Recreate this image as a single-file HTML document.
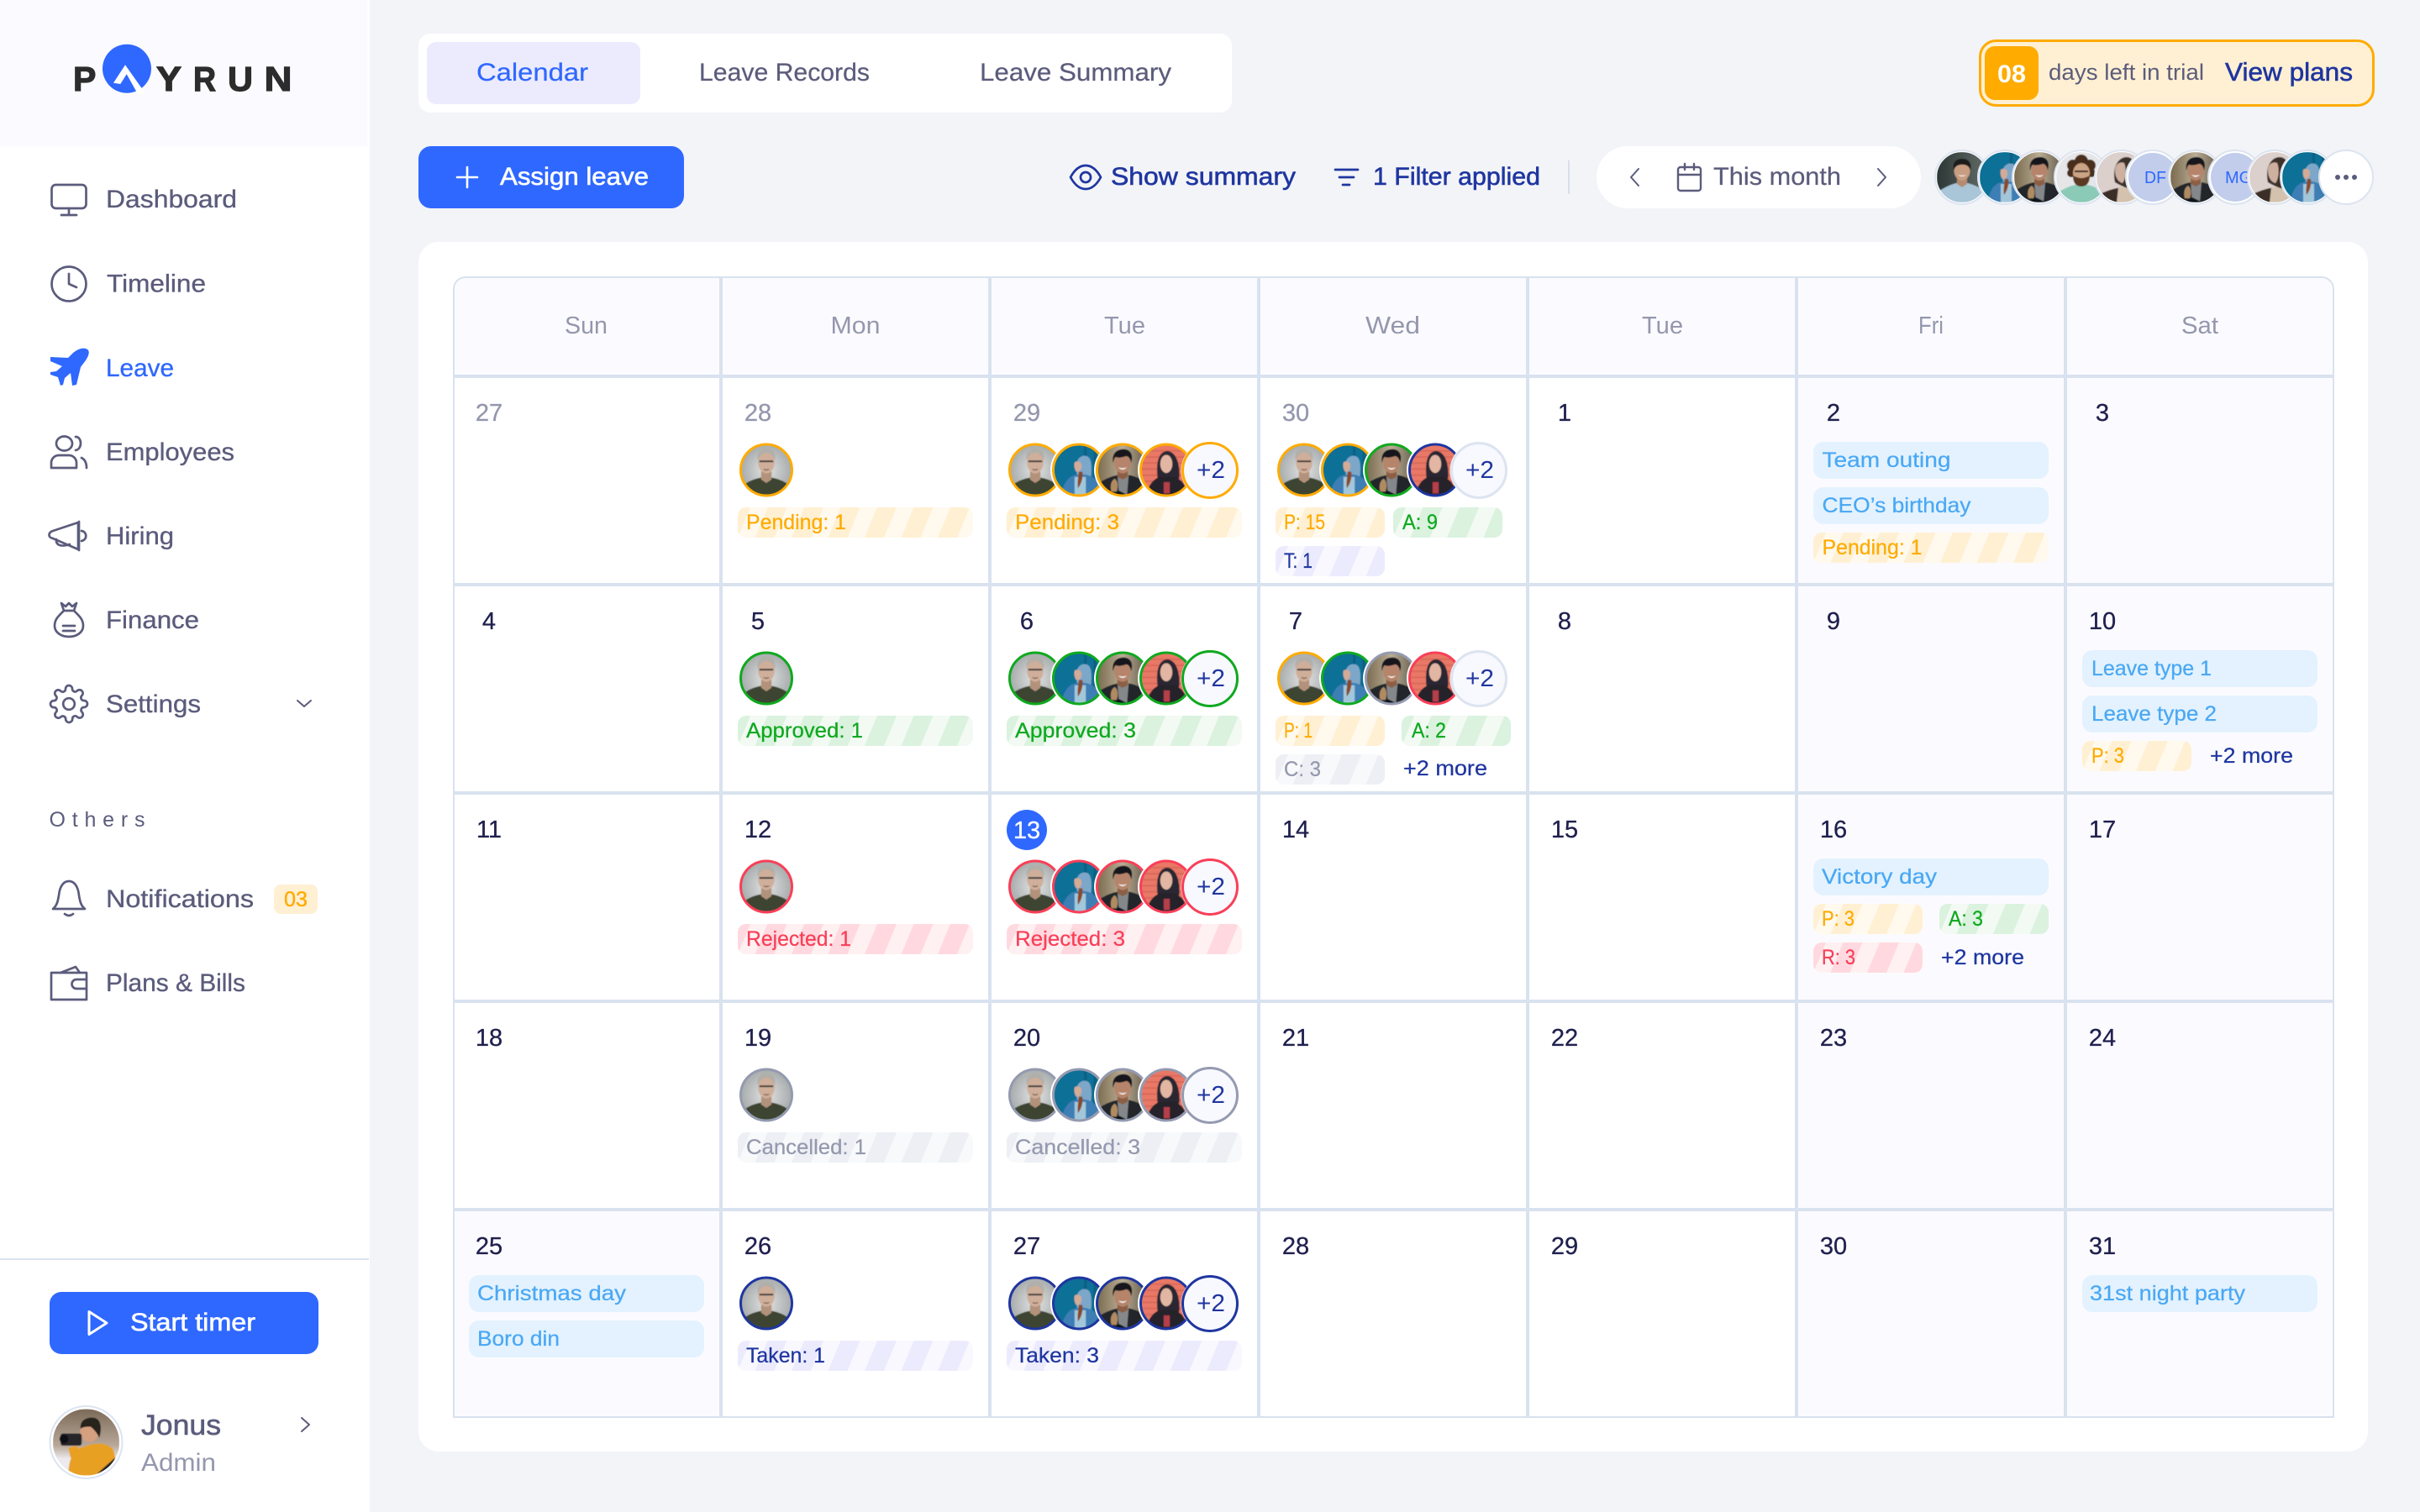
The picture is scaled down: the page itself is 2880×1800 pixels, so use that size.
<!DOCTYPE html>
<html lang="en"><head><meta charset="utf-8"><title>Payrun Leave Calendar</title>
<style>
html,body{margin:0;padding:0;width:2880px;height:1800px;overflow:hidden;background:#f3f4f8}
svg{display:block}
text{font-family:"Liberation Sans",sans-serif}
.nv{font-size:30px;fill:#5b5c7c;stroke:#5b5c7c;stroke-width:.35px}
.tb{font-size:30px;fill:#5b5c7c;stroke:#5b5c7c;stroke-width:.25px}
.m{stroke-width:.6px}
.ch{font-size:25px;stroke-width:.25px}
.d{font-size:29px;text-anchor:middle;fill:#20204f;stroke:#20204f;stroke-width:.3px}
.d.mu{fill:#9497ad;stroke:#9497ad}
.hd{font-size:29px;fill:#9497ad}
.pl{font-size:29px;fill:#1f36a0}
.cP{fill:#ffab00;stroke:#ffab00}.cA{fill:#0fa91f;stroke:#0fa91f}.cR{fill:#f93f58;stroke:#f93f58}.cC{fill:#9499ae;stroke:#9499ae}.cT{fill:#1f36a0;stroke:#1f36a0}.cH{fill:#4aa8f4;stroke:#4aa8f4}
.ic{fill:none;stroke:#5b5c7c;stroke-width:2.7;stroke-linecap:round;stroke-linejoin:round}
.nvi{fill:none;stroke:#1f36a0;stroke-width:2.7;stroke-linecap:round;stroke-linejoin:round}
.lg{font-size:41px;font-weight:700;fill:#2c2c2c;stroke:#2c2c2c;stroke-width:1.2px}
</style></head><body>
<svg width="2880" height="1800" viewBox="0 0 2880 1800" xmlns="http://www.w3.org/2000/svg">
<defs>
<filter id="b" x="-10%" y="-10%" width="120%" height="120%"><feGaussianBlur stdDeviation=".45"/></filter>
<clipPath id="c"><circle r="30"/></clipPath>
<radialGradient id="g1"><stop offset="0" stop-color="#e2e4e4"/><stop offset="1" stop-color="#a6aaaa"/></radialGradient>
<linearGradient id="g3" x1="0" x2="1" y1="0" y2="0"><stop offset="0" stop-color="#7a6a4e"/><stop offset=".5" stop-color="#b9ad95"/><stop offset="1" stop-color="#5d5445"/></linearGradient>
<linearGradient id="g5" x1="0" x2="1" y1="0" y2="0"><stop offset="0" stop-color="#2c3836"/><stop offset="1" stop-color="#626c68"/></linearGradient>
<linearGradient id="g8" x1="0" x2="0" y1="0" y2="1"><stop offset="0" stop-color="#7c6a58"/><stop offset=".55" stop-color="#b8a898"/><stop offset=".75" stop-color="#eceaee"/></linearGradient>
<pattern id="pP" patternUnits="userSpaceOnUse" width="43.5" height="36" patternTransform="translate(-8 0) skewX(-22.6)"><rect width="43.5" height="36" fill="#fff9ee"/><rect width="23" height="36" fill="#fff0d3"/></pattern>
<pattern id="pA" patternUnits="userSpaceOnUse" width="43.5" height="36" patternTransform="translate(-8 0) skewX(-22.6)"><rect width="43.5" height="36" fill="#f2faf3"/><rect width="23" height="36" fill="#daf2de"/></pattern>
<pattern id="pR" patternUnits="userSpaceOnUse" width="43.5" height="36" patternTransform="translate(-8 0) skewX(-22.6)"><rect width="43.5" height="36" fill="#fff0f2"/><rect width="23" height="36" fill="#ffd9df"/></pattern>
<pattern id="pC" patternUnits="userSpaceOnUse" width="43.5" height="36" patternTransform="translate(-8 0) skewX(-22.6)"><rect width="43.5" height="36" fill="#f8f9fb"/><rect width="23" height="36" fill="#edeff4"/></pattern>
<pattern id="pT" patternUnits="userSpaceOnUse" width="43.5" height="36" patternTransform="translate(-8 0) skewX(-22.6)"><rect width="43.5" height="36" fill="#f9f8ff"/><rect width="23" height="36" fill="#ecebfe"/></pattern>

<g id="p1" clip-path="url(#c)"><g filter="url(#b)"><rect x="-30" y="-30" width="60" height="60" fill="url(#g1)"/>
<path d="M-30 30V21Q-22 12-7 9H7Q22 12 30 21V30Z" fill="#3e4530"/><path d="M-6 2H6V11L0 15-6 11Z" fill="#b3927c"/>
<ellipse cx="0" cy="-9" rx="9.5" ry="13" fill="#cfae9a"/><path d="M-10-11C-11-22-6-25 0-25 7-25 11-21 10-11 8-17 4-20 0-20-4-20-8-17-10-11Z" fill="#b0afaa"/>
<path d="M-8-10H-2M2-10H8M-2-10H2" stroke="#2e3032" stroke-width="1.8"/><path d="M-3-1Q0 1 3-1" stroke="#7a5a4a" stroke-width="1.2" fill="none"/></g></g>

<g id="p2" clip-path="url(#c)"><g filter="url(#b)"><rect x="-30" y="-30" width="60" height="60" fill="#0e6f96"/><rect x="6" y="-30" width="3" height="60" fill="#0b5f82"/><rect x="17" y="-30" width="3" height="60" fill="#0b5f82"/>
<path d="M-3-2C-4-13 3-18 9-16 15-14 15-4 14 8L-2 8Z" fill="#7da7c9"/><path d="M-5-9C-2-11 3-10 3-5 3 0 0 3-3 2-5 0-6-5-5-9Z" fill="#d3ab96"/>
<path d="M-20 30C-19 16-12 7-4 6 4 4 14 5 20 12 24 18 26 24 26 30Z" fill="#3c7eb4"/><path d="M-5 30V8H8V30Z" fill="#a3c7da"/><path d="M0 2C-1 10-2 16-1 21 3 16 5 8 4 2Z" fill="#8a4a2a"/></g></g>

<g id="p3" clip-path="url(#c)"><g filter="url(#b)"><rect x="-30" y="-30" width="60" height="60" fill="url(#g3)"/>
<path d="M-30 30V17Q-18 8-6 6H8Q22 9 30 18V30Z" fill="#20262c"/><path d="M-6 6H7L5 30H-4Z" fill="#85888b"/>
<path d="M-6-2H6V8L0 11-6 8Z" fill="#8c5f44"/><ellipse cx="0" cy="-8" rx="9.5" ry="12" fill="#b5846a"/><path d="M-11-8C-13-20-6-24 1-24 8-24 13-19 10-8 9-13 7-16 4-16-1-14-6-14-8-15-10-13-10-11-11-8Z" fill="#17171b"/><path d="M-5-3Q0 2 5-3Q0-1-5-3Z" fill="#fff"/>
<path d="M-13 25C-15 18-13 12-9 10-5 13-5 20-7 25Z" fill="#b08b62"/><path d="M-14 30L-4 24 8 30Z" fill="#11141a"/></g></g>

<g id="p4" clip-path="url(#c)"><g filter="url(#b)"><rect x="-30" y="-30" width="60" height="60" fill="#ea7866"/>
<path d="M-30-22H30M-30-15H30M-30-8H30M-30-1H30M-30 6H30M-30 13H30" stroke="#d4675a" stroke-width="1.6"/>
<path d="M-10 10C-12-6-10-21 1-22 12-21 16-6 15 10Z" fill="#2a2630"/><path d="M-23 30C-22 20-16 11-8 8H10C18 11 24 20 25 30Z" fill="#25222a"/>
<ellipse cx="0" cy="-7" rx="7" ry="10.5" fill="#e2b6a2"/><path d="M-3 14H4V27H-3Z" fill="#b5404a"/></g></g>

<g id="p5" clip-path="url(#c)"><g filter="url(#b)"><rect x="-30" y="-30" width="60" height="60" fill="url(#g5)"/>
<path d="M-30 30V18Q-18 10-7 7H7Q18 10 30 18V30Z" fill="#a9c5d8"/><path d="M-6 0H6V8L0 12-6 8Z" fill="#b58a6f"/>
<ellipse cx="0" cy="-8" rx="9.5" ry="12" fill="#c89d81"/><path d="M-10-8C-12-19-6-22 0-22 7-22 12-18 10-8 8-14 5-15 0-15-4-15-8-14-10-8Z" fill="#1f1d1c"/><path d="M-5-3Q0 1 5-3Q0-1-5-3Z" fill="#fff"/></g></g>

<g id="p6" clip-path="url(#c)"><g filter="url(#b)"><rect x="-30" y="-30" width="60" height="60" fill="#e6e6e8"/>
<path d="M-30 30V20Q-18 11-7 9H7Q18 11 30 20V30Z" fill="#8ccab8"/>
<circle cx="-10" cy="-14" r="7" fill="#4a2d1c"/><circle cx="0" cy="-19" r="8" fill="#4a2d1c"/><circle cx="10" cy="-14" r="7" fill="#4a2d1c"/><circle cx="-12" cy="-5" r="5" fill="#4a2d1c"/><circle cx="12" cy="-5" r="5" fill="#4a2d1c"/>
<ellipse cx="0" cy="-5" rx="10" ry="12" fill="#cba385"/><path d="M-10-2C-10 8-5 11 0 11 5 11 10 8 10-2 6 0 3 1 0 1-3 1-6 0-10-2Z" fill="#5a3820"/><path d="M-8-7H-2M2-7H8M-2-7H2" stroke="#2a1c14" stroke-width="2"/></g></g>

<g id="p7" clip-path="url(#c)"><g filter="url(#b)"><rect x="-30" y="-30" width="60" height="60" fill="#dcd0cd"/>
<path d="M-30 30V22Q-15 14 0 12 20 14 30 24V30Z" fill="#3a2d28"/><path d="M-4 12H18L22 30H-6Z" fill="#d4c2ae"/>
<path d="M-8 6C-12-12-4-24 6-24 16-24 20-10 19 12 14 16 6 14-8 6Z" fill="#3d302b"/><path d="M-8-8C-8-16-2-19 3-17 6-10 5 2 1 7-4 6-8 0-8-8Z" fill="#cdb0a0"/></g></g>

<g id="p8" clip-path="url(#c)"><g filter="url(#b)"><rect x="-30" y="-30" width="60" height="60" fill="url(#g8)"/>
<path d="M-16 30C-16 16-12 6-2 4 8 0 18 0 24 6 28 14 26 26 24 30Z" fill="#e8a020"/><path d="M8 30L26 14 30 20V30Z" fill="#232326"/>
<ellipse cx="3" cy="-10" rx="8.5" ry="10" fill="#d5a080"/><path d="M-5-12C-6-21 2-23 8-22 14-20 14-12 12-4 10-8 7-12 4-14 0-14-3-14-5-12Z" fill="#28221f"/>
<rect x="-23" y="-8" width="19" height="11" rx="2" fill="#26262b"/><circle cx="-20" cy="-3" r="4" fill="#101014"/><path d="M-16 5L-8 3-6 9-14 14Z" fill="#e8a020"/></g></g>

<g id="a1"><circle r="34" fill="#fff"/><use href="#p1" transform="scale(1.03)"/><circle r="30.5" fill="none" stroke="currentColor" stroke-width="3"/></g>
<g id="a2"><circle r="34" fill="#fff"/><use href="#p2" transform="scale(1.03)"/><circle r="30.5" fill="none" stroke="currentColor" stroke-width="3"/></g>
<g id="a3"><circle r="34" fill="#fff"/><use href="#p3" transform="scale(1.03)"/><circle r="30.5" fill="none" stroke="currentColor" stroke-width="3"/></g>
<g id="a4"><circle r="34" fill="#fff"/><use href="#p4" transform="scale(1.03)"/><circle r="30.5" fill="none" stroke="currentColor" stroke-width="3"/></g>
<g id="pc"><circle r="34.5" fill="#fff"/><circle r="32.5" fill="#f8f8ff" stroke="currentColor" stroke-width="3"/></g>
<g id="st"><use href="#a1"/><use href="#a2" x="52"/><use href="#a3" x="104"/><use href="#a4" x="156"/><use href="#pc" x="208" y="0.5"/></g>
<g id="h1"><circle r="32" fill="#fff" stroke="#dce4f0" stroke-width="2"/></g>
</defs>

<rect width="2880" height="1800" fill="#f3f4f8"/>

<!-- Sidebar -->
<rect width="440" height="1800" fill="#fff"/>
<rect width="437" height="174" fill="#fbfbff"/>
<text x="87" y="108" class="lg">P</text>
<circle cx="151" cy="81.7" r="29" fill="#2f68ff"/>
<path d="M135 98.7L149 77.3 172.7 110.7H163.3L150.7 88.3 143.3 100Z" fill="#fff"/>
<text x="186" y="108" class="lg" textLength="30" lengthAdjust="spacingAndGlyphs">Y</text>
<text x="230" y="108" class="lg" textLength="27" lengthAdjust="spacingAndGlyphs">R</text>
<text x="271" y="108" class="lg" textLength="30" lengthAdjust="spacingAndGlyphs">U</text>
<text x="314.5" y="108" class="lg" textLength="33" lengthAdjust="spacingAndGlyphs">N</text>

<rect x="61.5" y="220" width="41" height="28" rx="5" class="ic"/><path d="M82 248V255M73 256H91" class="ic"/>
<text x="126" y="247" class="nv" textLength="156" lengthAdjust="spacingAndGlyphs">Dashboard</text>
<circle cx="82" cy="338" r="20.5" class="ic"/><path d="M82 326V338L91 342" class="ic"/>
<text x="127" y="347.5" class="nv" textLength="118" lengthAdjust="spacingAndGlyphs">Timeline</text>
<path d="M104 416C100 413 93 415 87 420L81 426 60 425V430L74 436 67 442 60 443V446L69 449 72 459 75 458 77 450 84 444 86 459 91 458 96 437 102 429C106 423 107 418 104 416Z" fill="#2f68ff"/>
<text x="126" y="448" class="nv" style="fill:#2f68ff;stroke:#2f68ff" textLength="81" lengthAdjust="spacingAndGlyphs">Leave</text>
<ellipse cx="76.5" cy="528" rx="9.5" ry="8.5" class="ic"/><path d="M61 557V551A9 9 0 0 1 70 542H82A9 9 0 0 1 91 551V557Z" class="ic"/><path d="M90 520C98 520 98 535 90 536M97 545C101 547 103 551 103 557" class="ic"/>
<text x="126" y="548" class="nv" textLength="153" lengthAdjust="spacingAndGlyphs">Employees</text>
<path d="M93 622L63 632C57 634 57 640 63 641L93 654ZM94 621V655M97 632C104 633 104 643 97 644M67 642C66 650 74 651 83 648" class="ic"/>
<text x="126" y="648" class="nv" textLength="81" lengthAdjust="spacingAndGlyphs">Hiring</text>
<path d="M73 718L78 722 82 718 86 722 91 718 88 727H76ZM76 727C70 733 65 737 65 745 65 753 73 758 82 758 91 758 99 753 99 745 99 737 94 733 88 727M75 745H89M75 751H89" class="ic"/>
<text x="126" y="748" class="nv" textLength="111" lengthAdjust="spacingAndGlyphs">Finance</text>
<g transform="translate(58 814) scale(2)" class="ic" style="stroke-width:1.35"><circle cx="12" cy="12" r="3.4"/><path d="M19.4 15a1.65 1.65 0 0 0 .33 1.82l.06.06a2 2 0 0 1 0 2.83 2 2 0 0 1-2.83 0l-.06-.06a1.65 1.65 0 0 0-1.82-.33 1.65 1.65 0 0 0-1 1.51V21a2 2 0 0 1-2 2 2 2 0 0 1-2-2v-.09A1.65 1.65 0 0 0 9 19.4a1.65 1.65 0 0 0-1.82.33l-.06.06a2 2 0 0 1-2.83 0 2 2 0 0 1 0-2.83l.06-.06a1.65 1.65 0 0 0 .33-1.82 1.65 1.65 0 0 0-1.51-1H3a2 2 0 0 1-2-2 2 2 0 0 1 2-2h.09A1.65 1.65 0 0 0 4.6 9a1.65 1.65 0 0 0-.33-1.82l-.06-.06a2 2 0 0 1 0-2.83 2 2 0 0 1 2.83 0l.06.06a1.65 1.65 0 0 0 1.82.33H9a1.65 1.65 0 0 0 1-1.51V3a2 2 0 0 1 2-2 2 2 0 0 1 2 2v.09a1.65 1.65 0 0 0 1 1.51 1.65 1.65 0 0 0 1.82-.33l.06-.06a2 2 0 0 1 2.83 0 2 2 0 0 1 0 2.83l-.06.06a1.65 1.65 0 0 0-.33 1.82V9a1.65 1.65 0 0 0 1.51 1H21a2 2 0 0 1 2 2 2 2 0 0 1-2 2h-.09a1.65 1.65 0 0 0-1.51 1z"/></g>
<text x="126" y="848" class="nv" textLength="113" lengthAdjust="spacingAndGlyphs">Settings</text>
<path d="M354 834L362 841 370 834" class="ic" style="stroke-width:2"/>

<text x="58.5" y="984" font-size="25" fill="#5b5c7c" textLength="114">Others</text>
<path d="M63 1082C68 1078 69 1072 70 1066 71 1056 75 1049 82 1049 89 1049 93 1056 94 1066 95 1072 96 1078 101 1082ZM77 1088Q82 1092 87 1088" class="ic"/>
<text x="126" y="1080" class="nv" textLength="176" lengthAdjust="spacingAndGlyphs">Notifications</text>
<rect x="326" y="1053" width="52" height="35" rx="8" fill="#fff0d3"/>
<text x="338" y="1079" font-size="25" fill="#ffab00" stroke="#ffab00" stroke-width=".4" textLength="28" lengthAdjust="spacingAndGlyphs">03</text>
<path d="M61 1158H103V1190H61ZM72 1158L90 1151 95 1158M103 1166H91A5.5 5.5 0 0 0 91 1177H103" class="ic"/>
<text x="126" y="1180" class="nv" textLength="166" lengthAdjust="spacingAndGlyphs">Plans &amp; Bills</text>

<rect y="1498" width="439" height="2" fill="#dde3f0"/>
<rect x="59" y="1538" width="320" height="74" rx="14" fill="#2f68ff"/>
<path d="M106 1561.5L127 1575 106 1588.5Z" fill="none" stroke="#fff" stroke-width="3" stroke-linejoin="round"/>
<text x="155" y="1584" class="m" font-size="30" fill="#fff" stroke="#fff" textLength="149" lengthAdjust="spacingAndGlyphs">Start timer</text>
<circle cx="102.5" cy="1717" r="43" fill="#fff" stroke="#dce4f0" stroke-width="2"/>
<use href="#p8" transform="translate(102.5 1717) scale(1.32)"/>
<text x="168" y="1708" font-size="34" fill="#5b5c7c" class="m" stroke="#5b5c7c" textLength="95" lengthAdjust="spacingAndGlyphs">Jonus</text>
<text x="168" y="1751" font-size="30" fill="#9497ad" textLength="89" lengthAdjust="spacingAndGlyphs">Admin</text>
<path d="M359 1688L368 1696 359 1704" class="ic" style="stroke-width:2"/>

<!-- Top bar -->
<rect x="498" y="40" width="968" height="94" rx="14" fill="#fff"/>
<rect x="508" y="50" width="254" height="74" rx="11" fill="#ecebfe"/>
<text x="567" y="96" class="tb" style="fill:#2f68ff;stroke:#2f68ff" textLength="133" lengthAdjust="spacingAndGlyphs">Calendar</text>
<text x="832" y="96" class="tb" textLength="203" lengthAdjust="spacingAndGlyphs">Leave Records</text>
<text x="1166" y="96" class="tb" textLength="228" lengthAdjust="spacingAndGlyphs">Leave Summary</text>

<rect x="2356.5" y="48.5" width="468" height="77" rx="19" fill="#fff0d3" stroke="#ffab00" stroke-width="3"/>
<rect x="2362" y="55" width="64" height="64" rx="12" fill="#ffab00"/>
<text x="2377" y="98" font-size="30" fill="#fff" font-weight="700" textLength="34" lengthAdjust="spacingAndGlyphs">08</text>
<text x="2438" y="95" font-size="27" fill="#5b5c7c" textLength="185" lengthAdjust="spacingAndGlyphs">days left in trial</text>
<text x="2648" y="96" font-size="31" fill="#1f36a0" class="m" stroke="#1f36a0" textLength="152" lengthAdjust="spacingAndGlyphs">View plans</text>

<rect x="498" y="174" width="316" height="74" rx="15" fill="#2f68ff"/>
<path d="M556 199V223M544 211H568" stroke="#fff" stroke-width="2.6" stroke-linecap="round"/>
<text x="595" y="220" font-size="30" fill="#fff" class="m" stroke="#fff" textLength="177" lengthAdjust="spacingAndGlyphs">Assign leave</text>

<path d="M1274 211C1280 200 1286 197 1292 197 1298 197 1304 200 1310 211 1304 222 1298 225 1292 225 1286 225 1280 222 1274 211Z" class="nvi"/><circle cx="1292" cy="211" r="6" class="nvi"/>
<text x="1322" y="220" font-size="30" fill="#1f36a0" class="m" stroke="#1f36a0" textLength="220" lengthAdjust="spacingAndGlyphs">Show summary</text>
<path d="M1589 202H1616M1594 211H1611M1598 220H1606" class="nvi"/>
<text x="1634" y="220" font-size="30" fill="#1f36a0" class="m" stroke="#1f36a0" textLength="199" lengthAdjust="spacingAndGlyphs">1 Filter applied</text>
<rect x="1866" y="191" width="2" height="40" fill="#d8deea"/>

<rect x="1900" y="174" width="386" height="74" rx="37" fill="#fff"/>
<path d="M1950 201L1941 211 1950 221M2235 201L2244 211 2235 221" class="ic" style="stroke-width:2"/>
<rect x="1997" y="199" width="27" height="28" rx="3" class="ic" style="stroke-width:2.4"/><path d="M1997 208H2024M2005 195V202M2016 195V202" class="ic" style="stroke-width:2.4"/>
<text x="2039" y="220" class="tb" textLength="152" lengthAdjust="spacingAndGlyphs">This month</text>

<g transform="translate(2335 211)"><use href="#h1"/><use href="#p5"/></g>
<g transform="translate(2386 211)"><use href="#h1"/><use href="#p2"/></g>
<g transform="translate(2427 211)"><use href="#h1"/><use href="#p3"/></g>
<g transform="translate(2477 211)"><use href="#h1"/><use href="#p6"/></g>
<g transform="translate(2525 211)"><use href="#h1"/><use href="#p7"/></g>
<g transform="translate(2562 211)"><use href="#h1"/><circle r="29" fill="#c1cdeb"/></g>
<text x="2552" y="218" font-size="20" fill="#2f68ff" textLength="26" lengthAdjust="spacingAndGlyphs">DF</text>
<g transform="translate(2613 211)"><use href="#h1"/><use href="#p3"/></g>
<g transform="translate(2660 211)"><use href="#h1"/><circle r="29" fill="#c1cdeb"/></g>
<text x="2648" y="218" font-size="20" fill="#2f68ff">MG</text>
<g transform="translate(2707 211)"><use href="#h1"/><use href="#p7"/></g>
<g transform="translate(2746 211)"><use href="#h1"/><use href="#p2"/></g>
<g transform="translate(2792 211)"><use href="#h1"/></g>
<circle cx="2782" cy="211" r="3" fill="#5b5c7c"/><circle cx="2792" cy="211" r="3" fill="#5b5c7c"/><circle cx="2802" cy="211" r="3" fill="#5b5c7c"/>

<!-- Calendar card -->
<rect x="498" y="288" width="2320" height="1440" rx="24" fill="#fff"/>
<path d="M540 448V344A14 14 0 0 1 554 330H2763A14 14 0 0 1 2777 344V448Z" fill="#fbfbff"/>
<rect x="2138" y="448" width="640" height="1240" fill="#fbfbff"/>
<rect x="540" y="1440" width="318" height="248" fill="#fbfbff"/>
<path d="M540 1687V344A14 14 0 0 1 554 330H2763A14 14 0 0 1 2777 344V1687Z" fill="none" stroke="#d9e2ef" stroke-width="2"/>
<path d="M540 448H2777M540 696H2777M540 944H2777M540 1192H2777M540 1440H2777M858 330V1687M1178 330V1687M1498 330V1687M1818 330V1687M2138 330V1687M2458 330V1687" stroke="#d9e2ef" stroke-width="4" fill="none"/>
<path d="M539 1687H2778" stroke="#d9e2ef" stroke-width="2"/>

<text x="672" y="397" class="hd" textLength="51" lengthAdjust="spacingAndGlyphs">Sun</text>
<text x="988.5" y="397" class="hd" textLength="59" lengthAdjust="spacingAndGlyphs">Mon</text>
<text x="1314" y="397" class="hd" textLength="49" lengthAdjust="spacingAndGlyphs">Tue</text>
<text x="1625" y="397" class="hd" textLength="65" lengthAdjust="spacingAndGlyphs">Wed</text>
<text x="1954" y="397" class="hd" textLength="49" lengthAdjust="spacingAndGlyphs">Tue</text>
<text x="2283" y="397" class="hd" textLength="30" lengthAdjust="spacingAndGlyphs">Fri</text>
<text x="2596" y="397" class="hd" textLength="44" lengthAdjust="spacingAndGlyphs">Sat</text>

<!-- Dates -->
<text x="582" y="501" class="d mu">27</text><text x="902" y="501" class="d mu">28</text><text x="1222" y="501" class="d mu">29</text><text x="1542" y="501" class="d mu">30</text><text x="1862" y="501" class="d">1</text><text x="2182" y="501" class="d">2</text><text x="2502" y="501" class="d">3</text>
<text x="582" y="749" class="d">4</text><text x="902" y="749" class="d">5</text><text x="1222" y="749" class="d">6</text><text x="1542" y="749" class="d">7</text><text x="1862" y="749" class="d">8</text><text x="2182" y="749" class="d">9</text><text x="2502" y="749" class="d">10</text>
<text x="582" y="997" class="d">11</text><text x="902" y="997" class="d">12</text><circle cx="1222" cy="988" r="24" fill="#2f68ff"/><text x="1222" y="998" class="d" style="fill:#fff;stroke:#fff">13</text><text x="1542" y="997" class="d">14</text><text x="1862" y="997" class="d">15</text><text x="2182" y="997" class="d">16</text><text x="2502" y="997" class="d">17</text>
<text x="582" y="1245" class="d">18</text><text x="902" y="1245" class="d">19</text><text x="1222" y="1245" class="d">20</text><text x="1542" y="1245" class="d">21</text><text x="1862" y="1245" class="d">22</text><text x="2182" y="1245" class="d">23</text><text x="2502" y="1245" class="d">24</text>
<text x="582" y="1493" class="d">25</text><text x="902" y="1493" class="d">26</text><text x="1222" y="1493" class="d">27</text><text x="1542" y="1493" class="d">28</text><text x="1862" y="1493" class="d">29</text><text x="2182" y="1493" class="d">30</text><text x="2502" y="1493" class="d">31</text>

<!-- Avatars -->
<use href="#a1" x="912" y="559.5" color="#ffab00"/><use href="#a1" x="912" y="807.5" color="#0fa91f"/><use href="#a1" x="912" y="1055.5" color="#f93f58"/><use href="#a1" x="912" y="1303.5" color="#949ab0"/><use href="#a1" x="912" y="1551.5" color="#1f36a0"/>
<use href="#st" x="1232" y="559.5" color="#ffab00"/><text x="1424" y="569" class="pl" textLength="34" lengthAdjust="spacingAndGlyphs">+2</text>
<use href="#st" x="1232" y="807.5" color="#0fa91f"/><text x="1424" y="817" class="pl" textLength="34" lengthAdjust="spacingAndGlyphs">+2</text>
<use href="#st" x="1232" y="1055.5" color="#f93f58"/><text x="1424" y="1065" class="pl" textLength="34" lengthAdjust="spacingAndGlyphs">+2</text>
<use href="#st" x="1232" y="1303.5" color="#949ab0"/><text x="1424" y="1313" class="pl" textLength="34" lengthAdjust="spacingAndGlyphs">+2</text>
<use href="#st" x="1232" y="1551.5" color="#1f36a0"/><text x="1424" y="1561" class="pl" textLength="34" lengthAdjust="spacingAndGlyphs">+2</text>

<use href="#a1" x="1552" y="559.5" color="#ffab00"/><use href="#a2" x="1604" y="559.5" color="#ffab00"/><use href="#a3" x="1656" y="559.5" color="#0fa91f"/><use href="#a4" x="1708" y="559.5" color="#1f36a0"/><use href="#pc" x="1760" y="560" color="#dce4f0"/><text x="1744" y="569" class="pl" textLength="34" lengthAdjust="spacingAndGlyphs">+2</text>
<use href="#a1" x="1552" y="807.5" color="#ffab00"/><use href="#a2" x="1604" y="807.5" color="#0fa91f"/><use href="#a3" x="1656" y="807.5" color="#949ab0"/><use href="#a4" x="1708" y="807.5" color="#f93f58"/><use href="#pc" x="1760" y="808" color="#dce4f0"/><text x="1744" y="817" class="pl" textLength="34" lengthAdjust="spacingAndGlyphs">+2</text>

<!-- Chips -->
<rect transform="translate(878 604)" width="280" height="36" rx="10" fill="url(#pP)"/><text x="888" y="630" class="ch cP" textLength="119" lengthAdjust="spacingAndGlyphs">Pending: 1</text>
<rect transform="translate(1198 604)" width="280" height="36" rx="10" fill="url(#pP)"/><text x="1208" y="630" class="ch cP" textLength="124" lengthAdjust="spacingAndGlyphs">Pending: 3</text>
<rect transform="translate(878 852)" width="280" height="36" rx="10" fill="url(#pA)"/><text x="888" y="878" class="ch cA" textLength="139" lengthAdjust="spacingAndGlyphs">Approved: 1</text>
<rect transform="translate(1198 852)" width="280" height="36" rx="10" fill="url(#pA)"/><text x="1208" y="878" class="ch cA" textLength="144" lengthAdjust="spacingAndGlyphs">Approved: 3</text>
<rect transform="translate(878 1100)" width="280" height="36" rx="10" fill="url(#pR)"/><text x="888" y="1126" class="ch cR" textLength="125" lengthAdjust="spacingAndGlyphs">Rejected: 1</text>
<rect transform="translate(1198 1100)" width="280" height="36" rx="10" fill="url(#pR)"/><text x="1208" y="1126" class="ch cR" textLength="131" lengthAdjust="spacingAndGlyphs">Rejected: 3</text>
<rect transform="translate(878 1348)" width="280" height="36" rx="10" fill="url(#pC)"/><text x="888" y="1374" class="ch cC" textLength="143" lengthAdjust="spacingAndGlyphs">Cancelled: 1</text>
<rect transform="translate(1198 1348)" width="280" height="36" rx="10" fill="url(#pC)"/><text x="1208" y="1374" class="ch cC" textLength="149" lengthAdjust="spacingAndGlyphs">Cancelled: 3</text>
<rect transform="translate(878 1596)" width="280" height="36" rx="10" fill="url(#pT)"/><text x="888" y="1622" class="ch cT" textLength="94" lengthAdjust="spacingAndGlyphs">Taken: 1</text>
<rect transform="translate(1198 1596)" width="280" height="36" rx="10" fill="url(#pT)"/><text x="1208" y="1622" class="ch cT" textLength="100" lengthAdjust="spacingAndGlyphs">Taken: 3</text>

<rect transform="translate(1518 604)" width="130" height="36" rx="10" fill="url(#pP)"/><text x="1528" y="630" class="ch cP" textLength="49" lengthAdjust="spacingAndGlyphs">P: 15</text>
<rect transform="translate(1658 604)" width="130" height="36" rx="10" fill="url(#pA)"/><text x="1669" y="630" class="ch cA" textLength="42" lengthAdjust="spacingAndGlyphs">A: 9</text>
<rect transform="translate(1518 650)" width="130" height="36" rx="10" fill="url(#pT)"/><text x="1528" y="676" class="ch cT" textLength="34" lengthAdjust="spacingAndGlyphs">T: 1</text>

<rect transform="translate(1518 852)" width="130" height="36" rx="10" fill="url(#pP)"/><text x="1528" y="878" class="ch cP" textLength="34" lengthAdjust="spacingAndGlyphs">P: 1</text>
<rect transform="translate(1668 852)" width="130" height="36" rx="10" fill="url(#pA)"/><text x="1680" y="878" class="ch cA" textLength="41" lengthAdjust="spacingAndGlyphs">A: 2</text>
<rect transform="translate(1518 898)" width="130" height="36" rx="10" fill="url(#pC)"/><text x="1528" y="924" class="ch cC" textLength="44" lengthAdjust="spacingAndGlyphs">C: 3</text>
<text x="1670" y="923" class="ch cT" textLength="100" lengthAdjust="spacingAndGlyphs">+2 more</text>

<rect x="2158" y="526" width="280" height="44" rx="12" fill="#e3f2fe"/><text x="2168.5" y="556" class="ch cH" textLength="153" lengthAdjust="spacingAndGlyphs">Team outing</text>
<rect x="2158" y="580" width="280" height="44" rx="12" fill="#e3f2fe"/><text x="2168.5" y="610" class="ch cH" textLength="177" lengthAdjust="spacingAndGlyphs">CEO’s birthday</text>
<rect transform="translate(2158 634)" width="280" height="36" rx="10" fill="url(#pP)"/><text x="2168.5" y="660" class="ch cP" textLength="119" lengthAdjust="spacingAndGlyphs">Pending: 1</text>

<rect x="2478" y="774" width="280" height="44" rx="12" fill="#e3f2fe"/><text x="2489" y="804" class="ch cH" textLength="143" lengthAdjust="spacingAndGlyphs">Leave type 1</text>
<rect x="2478" y="828" width="280" height="44" rx="12" fill="#e3f2fe"/><text x="2489" y="858" class="ch cH" textLength="149" lengthAdjust="spacingAndGlyphs">Leave type 2</text>
<rect transform="translate(2478 882)" width="130" height="36" rx="10" fill="url(#pP)"/><text x="2489" y="908" class="ch cP" textLength="39" lengthAdjust="spacingAndGlyphs">P: 3</text>
<text x="2630" y="908" class="ch cT" textLength="99" lengthAdjust="spacingAndGlyphs">+2 more</text>

<rect x="2158" y="1022" width="280" height="44" rx="12" fill="#e3f2fe"/><text x="2168" y="1052" class="ch cH" textLength="137" lengthAdjust="spacingAndGlyphs">Victory day</text>
<rect transform="translate(2158 1076)" width="130" height="36" rx="10" fill="url(#pP)"/><text x="2168" y="1102" class="ch cP" textLength="39" lengthAdjust="spacingAndGlyphs">P: 3</text>
<rect transform="translate(2308 1076)" width="130" height="36" rx="10" fill="url(#pA)"/><text x="2319" y="1102" class="ch cA" textLength="41" lengthAdjust="spacingAndGlyphs">A: 3</text>
<rect transform="translate(2158 1122)" width="130" height="36" rx="10" fill="url(#pR)"/><text x="2168" y="1148" class="ch cR" textLength="40" lengthAdjust="spacingAndGlyphs">R: 3</text>
<text x="2310" y="1148" class="ch cT" textLength="99" lengthAdjust="spacingAndGlyphs">+2 more</text>

<rect x="558" y="1518" width="280" height="44" rx="12" fill="#e3f2fe"/><text x="568" y="1548" class="ch cH" textLength="177" lengthAdjust="spacingAndGlyphs">Christmas day</text>
<rect x="558" y="1572" width="280" height="44" rx="12" fill="#e3f2fe"/><text x="568" y="1602" class="ch cH" textLength="98" lengthAdjust="spacingAndGlyphs">Boro din</text>
<rect x="2478" y="1518" width="280" height="44" rx="12" fill="#e3f2fe"/><text x="2487" y="1548" class="ch cH" textLength="185" lengthAdjust="spacingAndGlyphs">31st night party</text>
</svg>
</body></html>
